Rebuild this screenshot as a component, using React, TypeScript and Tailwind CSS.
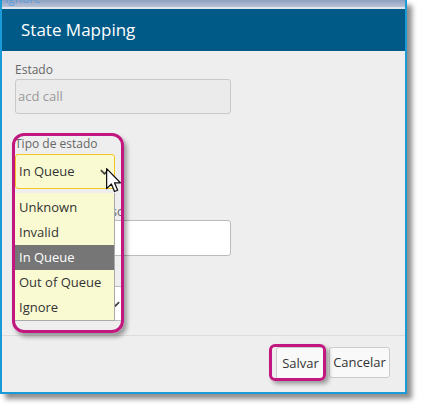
import React from "react";

const font = "font-['Segoe_UI','Open_Sans','Noto_Sans',sans-serif]";

const options = ["Unknown", "Invalid", "In Queue", "Out of Queue", "Ignore"];

function Chevron({ className }: { className?: string }) {
  return (
    <svg viewBox="0 0 10 6" className={className} fill="none">
      <path d="M1 1 L5 5 L9 1" stroke="#444" strokeWidth="2" />
    </svg>
  );
}

function Cursor() {
  return (
    <svg viewBox="0 0 12 20" className="h-[25px] w-[15px]">
      <path
        d="M0.5 0.5 L0.5 16.5 L4.3 12.8 L6.8 18.8 L9.3 17.8 L6.8 11.8 L11.5 11.8 Z"
        fill="#fff"
        stroke="#111"
        strokeWidth="1"
        strokeLinejoin="round"
      />
    </svg>
  );
}

export default function App() {
  return (
    <div className={`relative h-[408px] w-[421px] overflow-hidden bg-white ${font}`}>
      <div className="flex h-[394px] w-[407px] flex-col border-x-2 border-b-2 border-[#1b9ad8] bg-[#eeeeee] shadow-[5px_5px_5px_rgba(0,0,0,0.45)]">
        <div className="h-[7px] overflow-hidden bg-gradient-to-b from-[#8fa0be] to-[#b7c2d6] pl-[3px]">
          <div className="-mt-[8px] text-[12px] leading-[14px] text-[#5b9fe0]">Ignore</div>
        </div>
        <div className="h-[2px] bg-[#dfe6ee]" />
        <div className="flex h-[42px] items-center bg-[#005a87] pl-[19px] text-[17px] text-white">
          State Mapping
        </div>

        <div className="flex h-[284px] flex-col pl-[13px] pt-[11px]">
          <label className="h-[16px] text-[12px] leading-[16px] text-[#666]">Estado</label>
          <div className="mt-[1px] flex h-[35px] w-[216px] items-center rounded-[3px] border border-[#c9c9c9] bg-[#ebebeb] pl-[2px] text-[13px] text-[#999]">
            acd call
          </div>

          <label className="mt-[22px] h-[16px] text-[12px] leading-[16px] text-[#666]">Tipo de estado</label>
          <div className="mt-[2px] flex h-[35px] w-[100px] items-center justify-between rounded-[3px] border border-[#f3c623] bg-[#fafad2] pl-[3px] pr-[5px] text-[13px] text-[#333]">
            <span>In Queue</span>
            <Chevron className="h-[6px] w-[9px]" />
          </div>

          <label className="mt-[15px] h-[16px] text-[12px] leading-[16px] text-[#666]">Estado do processo</label>
          <div className="h-[36px] w-[216px] rounded-[3px] border border-[#bbb] bg-white" />

          <label className="mt-[12px] h-[16px] text-[12px] leading-[16px] text-[#666]">Código</label>
          <div className="mt-[2px] flex h-[35px] w-[108px] items-center justify-end rounded-[3px] border border-[#bbb] bg-white pr-[2px]">
            <Chevron className="h-[6px] w-[9px]" />
          </div>
        </div>

        <div className="flex flex-1 items-start justify-end gap-[4px] border-t border-[#dcdcdc] pr-[15px] pt-[11px]">
          <button className="h-[33px] w-[49px] rounded-[3px] border border-[#ccc] bg-[#f9f9f9] text-[13px] text-[#333]">
            Salvar
          </button>
          <button className="h-[31px] w-[61px] rounded-[3px] border border-[#ccc] bg-[#f9f9f9] text-[13px] text-[#333]">
            Cancelar
          </button>
        </div>
      </div>

      {/* open dropdown list */}
      <ul className="absolute left-[15px] top-[193px] w-[100px] border-b border-r border-[#aaa] bg-[#fafad2] pt-[2px] text-[13px] text-[#333]">
        {options.map((o) => (
          <li
            key={o}
            className={`flex h-[25px] items-center pl-[4px] ${o === "In Queue" ? "bg-[#767676] text-white" : ""}`}
          >
            {o}
          </li>
        ))}
      </ul>

      <div className="absolute left-[106px] top-[168px]">
        <Cursor />
      </div>

      {/* annotation highlights */}
      <div className="absolute left-[12px] top-[133px] h-[200px] w-[112px] rounded-[12px] border-[3px] border-[#c2177f] shadow-[3px_4px_4px_rgba(0,0,0,0.35)]" />
      <div className="absolute left-[269px] top-[344px] h-[37px] w-[57px] rounded-[6px] border-[3px] border-[#c2177f] shadow-[3px_3px_4px_rgba(0,0,0,0.35)]" />
    </div>
  );
}
